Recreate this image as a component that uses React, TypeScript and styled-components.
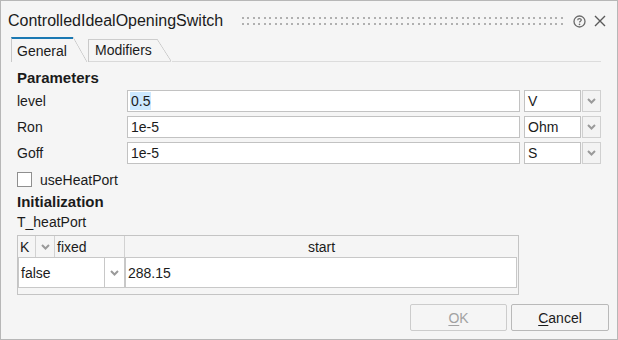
import React from 'react';
import styled, { createGlobalStyle } from 'styled-components';

const Global = createGlobalStyle`
  html, body { margin: 0; padding: 0; background: #f5f5f5; }
  body { font-family: "Liberation Sans", Arial, sans-serif; font-size: 14px; color: #1b1b1b; }
  * { box-sizing: border-box; }
`;

const Window = styled.div`
  width: 618px;
  height: 340px;
  border: 1px solid #b7b7b7;
  background: #f5f5f5;
  display: flex;
  flex-direction: column;
`;

const TitleBar = styled.div`
  height: 36px;
  display: flex;
  align-items: center;
  padding: 4px 10px 0 7px;
`;

const Title = styled.div`
  font-size: 16px;
  color: #1b1b1b;
  white-space: nowrap;
`;

const Grip = styled.div`
  flex: 1;
  height: 8px;
  margin: 0 8px 0 19px;
  background-image: linear-gradient(to right, #b0b0b0 0 2px, transparent 2px 5px, #b0b0b0 5px 7px, transparent 7px);
  background-size: 11px 8px;
  -webkit-mask-image: linear-gradient(to bottom, #000 0 2px, transparent 2px);
  -webkit-mask-size: 100% 6px;
  mask-image: linear-gradient(to bottom, #000 0 2px, transparent 2px);
  mask-size: 100% 6px;
`;

const IconBox = styled.div<{ $gap?: number }>`
  display: flex;
  align-items: center;
  justify-content: center;
  width: 14px;
  height: 14px;
  margin-left: ${p => p.$gap ?? 0}px;
`;

const TabBar = styled.div`
  display: flex;
  align-items: flex-end;
  height: 25px;
  padding-left: 10px;
  margin-right: 16px;
`;

const Tab = styled.div<{ $active?: boolean; $w: number }>`
  position: relative;
  width: ${p => p.$w}px;
  height: ${p => (p.$active ? 25 : 23)}px;
  margin-right: 1px;
  display: flex;
  align-items: flex-end;
  padding: 0 0 3px ${p => (p.$active ? 6 : 7)}px;
  line-height: 16px;
  font-size: 14px;
  color: #1b1b1b;
  border-bottom: ${p => (p.$active ? 'none' : '1px solid #d9d9d9')};
  &::before {
    content: '';
    position: absolute;
    left: 0;
    top: 0;
    bottom: ${p => (p.$active ? 0 : -1)}px;
    right: 14px;
    border-left: 1px solid #c9c9c9;
    border-top: ${p => (p.$active ? '2px solid #1b79b3' : '1px solid #cdcdcd')};
  }
  &::after {
    content: '';
    position: absolute;
    right: 0;
    top: 0;
    width: 14px;
    height: 100%;
    background: linear-gradient(to top right, transparent calc(50% - 0.7px), #c9c9c9 50%, transparent calc(50% + 0.7px));
  }
`;

const TabFill = styled.div`
  flex: 1;
  border-bottom: 1px solid #dcdcdc;
`;

const Panel = styled.div`
  flex: 1;
  padding: 0 16px 0 16px;
  display: flex;
  flex-direction: column;
`;

const SectionTitle = styled.div<{ $top: number }>`
  font-weight: bold;
  font-size: 15px;
  line-height: 16px;
  margin-top: ${p => p.$top}px;
`;

const Rows = styled.div`
  display: flex;
  flex-direction: column;
  gap: 4px;
  margin-top: 4px;
`;

const Row = styled.div`
  display: flex;
  align-items: center;
  height: 22px;
`;

const Label = styled.div`
  width: 110px;
  line-height: 16px;
`;

const TextInput = styled.div`
  flex: 1;
  height: 22px;
  background: #fff;
  border: 1px solid #c2c2c2;
  display: flex;
  align-items: center;
  padding-left: 2px;
  margin-right: 4px;
`;

const Selected = styled.span`
  background: #cce8ff;
  padding: 1px 1px;
`;

const Plain = styled.span`
  padding: 0 1px;
`;

const UnitBox = styled.div`
  width: 57px;
  height: 22px;
  background: #fff;
  border: 1px solid #c2c2c2;
  display: flex;
  align-items: center;
  padding-left: 3px;
  margin-right: 1px;
`;

const DropBtn = styled.div`
  width: 19px;
  height: 22px;
  border: 1px solid #d0d0d0;
  background: #f3f3f3;
  display: flex;
  align-items: center;
  justify-content: center;
`;

const CheckRow = styled.div`
  display: flex;
  align-items: center;
  gap: 8px;
  margin-top: 8px;
  height: 15px;
`;

const CheckBox = styled.div`
  width: 15px;
  height: 15px;
  border: 1px solid #8f8f8f;
  background: #fff;
`;

const SubLabel = styled.div`
  line-height: 16px;
  margin-top: 4px;
`;

const Table = styled.div`
  width: 502px;
  margin-top: 5px;
  border: 1px solid #c4c4c4;
  background: #f5f5f5;
  padding-bottom: 6px;
`;

const HeadRow = styled.div`
  display: flex;
  height: 21px;
`;

const HeadCell = styled.div<{ $w?: number; $center?: boolean }>`
  ${p => (p.$w ? `width: ${p.$w}px;` : 'flex: 1;')}
  border-right: 1px solid #d2d2d2;
  display: flex;
  align-items: center;
  justify-content: ${p => (p.$center ? 'center' : 'flex-start')};
  padding-left: ${p => (p.$center ? 0 : 2)}px;
  &:last-child { border-right: none; }
`;

const DataRow = styled.div`
  display: flex;
  height: 31px;
  padding: 0 1px 0 0;
`;

const DataCell = styled.div<{ $w?: number; $center?: boolean }>`
  ${p => (p.$w ? `width: ${p.$w}px;` : 'flex: 1;')}
  background: #fff;
  border: 1px solid #c8c8c8;
  border-left-width: ${p => (p.$center ? 0 : 1)}px;
  display: flex;
  align-items: center;
  justify-content: ${p => (p.$center ? 'center' : 'flex-start')};
  padding-left: ${p => (p.$center ? 0 : 2)}px;
`;

const Footer = styled.div`
  display: flex;
  justify-content: flex-end;
  gap: 4px;
  padding: 0 8px 8px 0;
`;

const Button = styled.div<{ $disabled?: boolean; $w: number }>`
  width: ${p => p.$w}px;
  height: 27px;
  border: 1px solid ${p => (p.$disabled ? '#cccccc' : '#b9b9b9')};
  border-radius: 2px;
  background: #f5f5f5;
  display: flex;
  align-items: center;
  justify-content: center;
  color: ${p => (p.$disabled ? '#a2a2a2' : '#1b1b1b')};
  font-size: 14px;
  u { text-decoration: underline; text-underline-offset: 2px; }
`;

const Chevron = () => (
  <svg width="9" height="6" viewBox="0 0 9 6">
    <polyline points="1,1 4.5,4.5 8,1" fill="none" stroke="#9a9a9a" strokeWidth="2" />
  </svg>
);

const HelpIcon = () => (
  <svg width="13" height="13" viewBox="0 0 13 13">
    <circle cx="6.5" cy="6.5" r="5.5" fill="none" stroke="#6a6a6a" strokeWidth="1.3" />
    <path d="M4.7 5.2 C4.7 3.2 8.3 3.2 8.3 5.1 C8.3 6.3 6.5 6.3 6.5 7.6" fill="none" stroke="#6a6a6a" strokeWidth="1.2" />
    <circle cx="6.5" cy="9.4" r="0.8" fill="#6a6a6a" />
  </svg>
);

const CloseIcon = () => (
  <svg width="12" height="12" viewBox="0 0 12 12">
    <path d="M1 1 L11 11 M11 1 L1 11" stroke="#5a5a5a" strokeWidth="1.4" />
  </svg>
);

const params = [
  { name: 'level', value: '0.5', unit: 'V', selected: true },
  { name: 'Ron', value: '1e-5', unit: 'Ohm' },
  { name: 'Goff', value: '1e-5', unit: 'S' },
];

export default function App() {
  return (
    <>
      <Global />
      <Window>
        <TitleBar>
          <Title>ControlledIdealOpeningSwitch</Title>
          <Grip />
          <IconBox><HelpIcon /></IconBox>
          <IconBox $gap={7}><CloseIcon /></IconBox>
        </TitleBar>
        <TabBar>
          <Tab $active $w={76}>General</Tab>
          <Tab $w={83}>Modifiers</Tab>
          <TabFill />
        </TabBar>
        <Panel>
          <SectionTitle $top={8}>Parameters</SectionTitle>
          <Rows>
            {params.map(p => (
              <Row key={p.name}>
                <Label>{p.name}</Label>
                <TextInput>
                  {p.selected ? <Selected>{p.value}</Selected> : <Plain>{p.value}</Plain>}
                </TextInput>
                <UnitBox>{p.unit}</UnitBox>
                <DropBtn><Chevron /></DropBtn>
              </Row>
            ))}
          </Rows>
          <CheckRow>
            <CheckBox />
            <span>useHeatPort</span>
          </CheckRow>
          <SectionTitle $top={7}>Initialization</SectionTitle>
          <SubLabel>T_heatPort</SubLabel>
          <Table>
            <HeadRow>
              <HeadCell $w={18}>K</HeadCell>
              <HeadCell $w={19} $center><Chevron /></HeadCell>
              <HeadCell $w={70}>fixed</HeadCell>
              <HeadCell $center>start</HeadCell>
            </HeadRow>
            <DataRow>
              <DataCell $w={87}>false</DataCell>
              <DataCell $w={20} $center><Chevron /></DataCell>
              <DataCell>288.15</DataCell>
            </DataRow>
          </Table>
        </Panel>
        <Footer>
          <Button $disabled $w={97}><span><u>O</u>K</span></Button>
          <Button $w={98}><span><u>C</u>ancel</span></Button>
        </Footer>
      </Window>
    </>
  );
}
